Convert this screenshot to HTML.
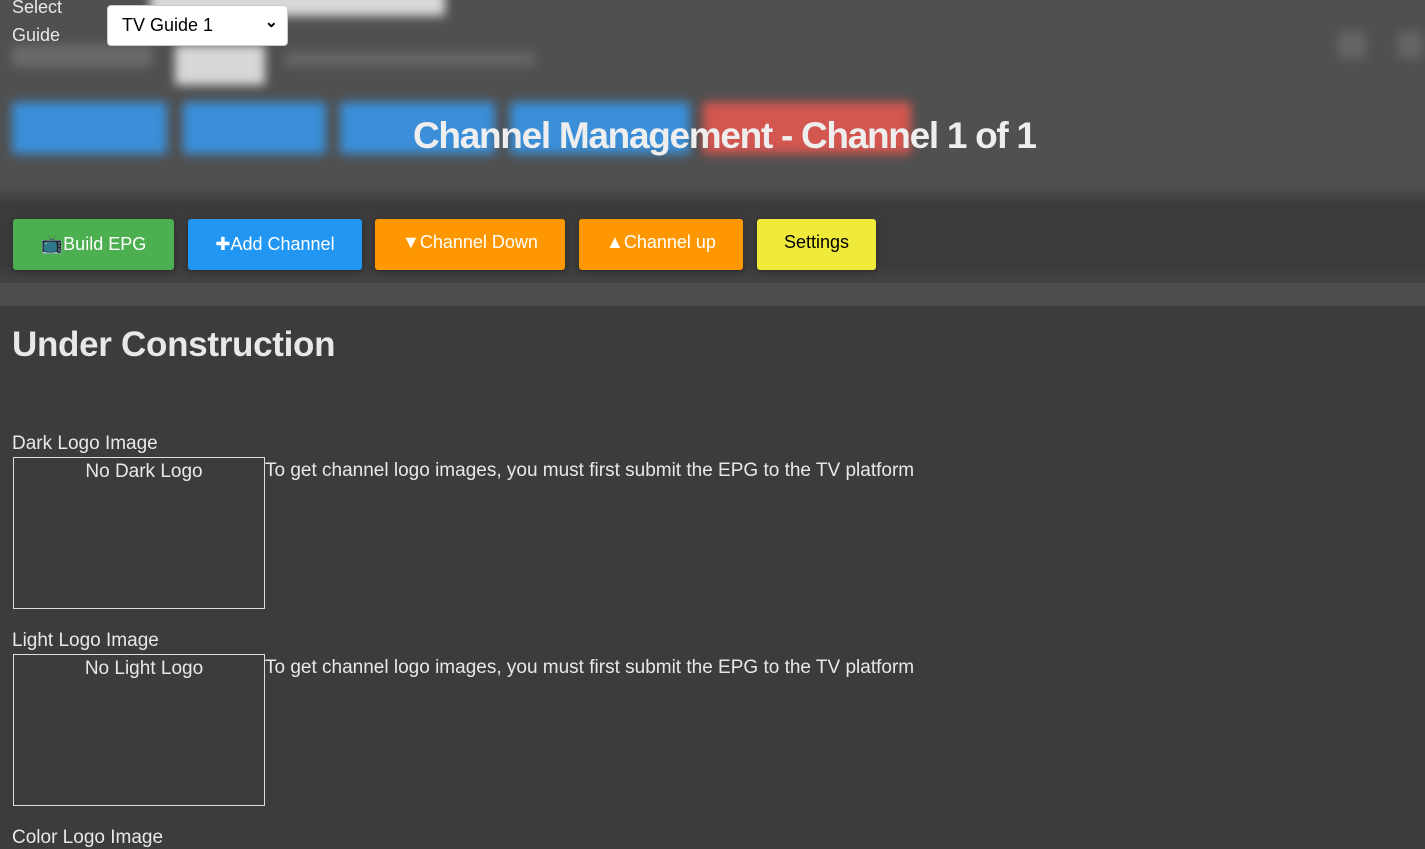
<!DOCTYPE html>
<html><head><meta charset="utf-8"><style>
*{box-sizing:border-box;margin:0;padding:0}
body{width:1425px;height:848px;overflow:hidden;background:#3c3c3c;font-family:"Liberation Sans",sans-serif;color:#e8e8e8;position:relative}
.hdr{position:absolute;left:0;top:0;width:1425px;height:200px;background:#505050}
.blur{position:absolute;filter:blur(5px)}
.band{position:absolute;left:0;top:185px;width:1425px;height:100px;background:linear-gradient(#505050,#3b3b3b 20%,#3b3b3b 80%,#444)}
.strip{position:absolute;left:0;top:283px;width:1425px;height:23px;background:#4d4d4d}
.btn{position:absolute;top:219px;height:51px;border-radius:3px;font-size:18px;display:flex;align-items:center;justify-content:center;color:#fff;box-shadow:0 2px 6px rgba(0,0,0,.3)}
.abs{position:absolute}
.box{position:absolute;left:13px;width:252px;height:152px;border:1px solid #ddd;text-align:center;font-size:19px;padding-top:3px;padding-left:10px}
.lbl{position:absolute;left:12px;font-size:19px}
.msg{position:absolute;left:265px;font-size:19px}
</style></head><body>
<div class="hdr"></div>
<div class="blur" style="left:150px;top:-10px;width:295px;height:26px;background:#d8d8d8"></div>
<div class="blur" style="left:12px;top:45px;width:140px;height:22px;background:#6a6a6a"></div>
<div class="blur" style="left:175px;top:45px;width:90px;height:40px;background:#d8d8d8"></div>
<div class="blur" style="left:285px;top:52px;width:250px;height:14px;background:#666"></div>
<div class="blur" style="left:1338px;top:32px;width:28px;height:26px;background:#666"></div>
<div class="blur" style="left:1398px;top:32px;width:24px;height:26px;background:#666"></div>
<div class="blur" style="left:12px;top:102px;width:155px;height:52px;background:#3a8fd8"></div>
<div class="blur" style="left:183px;top:102px;width:143px;height:52px;background:#3a8fd8"></div>
<div class="blur" style="left:340px;top:102px;width:155px;height:52px;background:#3a8fd8"></div>
<div class="blur" style="left:510px;top:102px;width:180px;height:52px;background:#3a8fd8"></div>
<div class="blur" style="left:703px;top:102px;width:208px;height:52px;background:#d45650"></div>
<div class="abs" style="left:413px;top:115px;font-size:37px;font-weight:bold;color:#eee;letter-spacing:-1.3px">Channel Management - Channel 1 of 1</div>
<div class="abs" style="left:12px;top:-7px;font-size:18px;line-height:28px;color:#e8e8e8">Select<br>Guide</div>
<div class="abs" style="left:107px;top:5px;width:181px;height:41px;background:#fff;border-radius:4px;border:1px solid #ccc;color:#000;font-size:18px;padding:9px 0 0 14px">TV Guide 1<span style="position:absolute;right:9px;top:6px;font-size:16px;font-weight:bold">&#8964;</span></div>
<div class="band"></div>
<div class="strip"></div>
<div class="btn" style="left:13px;width:161px;background:#4caf50">📺Build EPG</div>
<div class="btn" style="left:188px;width:174px;background:#2196f3">✚Add Channel</div>
<div class="btn" style="left:375px;width:190px;background:#ff9800;padding-bottom:4px">▼Channel Down</div>
<div class="btn" style="left:579px;width:164px;background:#ff9800;padding-bottom:4px">▲Channel up</div>
<div class="btn" style="left:757px;width:119px;background:#f0eb3b;color:#000;padding-bottom:4px">Settings</div>
<div class="abs" style="left:12px;top:325px;font-size:35px;font-weight:bold;color:#e8e8e8;letter-spacing:-0.3px">Under Construction</div>
<div class="lbl" style="top:433px">Dark Logo Image</div>
<div class="box" style="top:457px">No Dark Logo</div>
<div class="msg" style="top:460px">To get channel logo images, you must first submit the EPG to the TV platform</div>
<div class="lbl" style="top:630px">Light Logo Image</div>
<div class="box" style="top:654px">No Light Logo</div>
<div class="msg" style="top:657px">To get channel logo images, you must first submit the EPG to the TV platform</div>
<div class="lbl" style="top:827px">Color Logo Image</div>
</body></html>
